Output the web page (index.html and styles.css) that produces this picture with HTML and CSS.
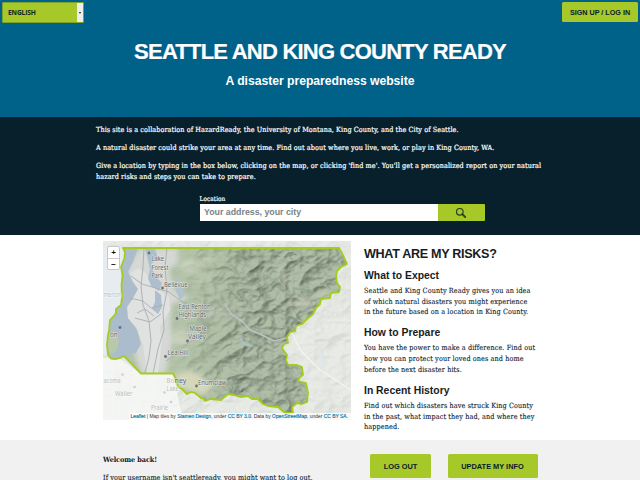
FILE: index.html
```html
<!DOCTYPE html>
<html lang="en">
<head>
<meta charset="utf-8">
<title>Seattle and King County Ready</title>
<link rel="stylesheet" href="styles.css">
</head>
<body>
<header class="banner">
  <div class="topbar">
    <div class="language"><span>ENGLISH</span><i class="arrow"></i></div>
    <a class="button login">SIGN UP / LOG IN</a>
  </div>
  <h1>SEATTLE AND KING COUNTY READY</h1>
  <p class="tagline">A disaster preparedness website</p>
</header>
<section class="intro">
  <p>This site is a collaboration of HazardReady, the University of Montana, King County, and the City of Seattle.</p>
  <p>A natural disaster could strike your area at any time. Find out about where you live, work, or play in King County, WA.</p>
  <p>Give a location by typing in the box below, clicking on the map, or clicking 'find me'. You'll get a personalized report on your natural<br>hazard risks and steps you can take to prepare.</p>
  <div class="search">
    <div class="label">Location</div>
    <div class="row">
      <div class="field">Your address, your city</div>
      <div class="go"><svg width="12" height="12" viewBox="0 0 12 12"><circle cx="4.8" cy="4.8" r="3.3" fill="none" stroke="#263f20" stroke-width="1.2"/><path d="M7.3 7.2 10.2 10" stroke="#263f20" stroke-width="1.8" stroke-linecap="round"/></svg></div>
    </div>
  </div>
</section>
<main class="content">
  <div class="map">
    <svg class="terrain" width="248" height="179" viewBox="103 241 248 179">
      <defs>
        <path id="county" d="M123 248 125 252 124.500 258 121 267 122.500 275 121.500 285 122 298 121 305 116 309 115.700 314 110 320 109 331 108 335 107 345 108 355 111 358.500 115 359 120 358 124 356 141 373.500H173L176.500 380 178 387 182 389 187 394 191 392 195 393 201 398 203 398 205 401 211 399 221 400 228 394 234 395 240 397 248 396 252 399 258 399 263 404 268 406 278 407 285 413H293L292 407 297 403 302 404 307 402 308 393 306 383 298 381 300 377 303 375 302 367 297 365 288 365 286 360 287 355 282 348 284 344 288 343 287 337 290 332 295 331 296 326 302 324 307 319 313 314 316 308 320 304 321 299 330 298 331 293 339 292 340 287 337 283 336 277 337 271 341 267 347 264 342 253 339 248Z"/>
        <clipPath id="inside"><use href="#county"/></clipPath>
        <linearGradient id="east" x1="180" x2="245" y1="310" y2="315" gradientUnits="userSpaceOnUse"><stop offset="0" stop-color="#fff" stop-opacity=".1"/><stop offset="1" stop-color="#fff"/></linearGradient>
        <mask id="fade" maskUnits="userSpaceOnUse" x="103" y="241" width="248" height="179"><rect x="103" y="241" width="248" height="179" fill="url(#east)"/></mask>
        <filter id="relief" x="0" y="0" width="100%" height="100%" color-interpolation-filters="sRGB">
          <feTurbulence type="turbulence" baseFrequency=".035 .045" numOctaves="3" seed="8"/>
          <feColorMatrix values="0 0 0 0 0  0 0 0 0 0  0 0 0 0 0  -1 0 0 0 1"/>
          <feDiffuseLighting surfaceScale="6" diffuseConstant="1" lighting-color="#c4d2bb"><feDistantLight azimuth="225" elevation="58"/></feDiffuseLighting>
        </filter>
        <filter id="soft"><feGaussianBlur stdDeviation="2.500"/></filter>
      </defs>
      <rect x="103" y="241" width="248" height="179" fill="#eef0ec"/>
      <rect x="103" y="241" width="248" height="179" filter="url(#relief)" opacity=".1"/>
      <path d="M103 248H123L121 305 109 320 107 355H103Z" fill="#e6ecf0"/>
      <path d="M103 358 120 359 141 374 173 374 183 420H103Z" fill="#f8f9f8" opacity=".8"/>
      <path d="M292 333 301 351 320 370 351 390" fill="none" stroke="#f3f4f2" stroke-width="1.300"/>
      <path d="m319 338 3 22 3 12-5-8Zm20 15 1 17 6 7-7-3Z" fill="#dfe6ec"/>
      <g clip-path="url(#inside)">
        <rect x="103" y="241" width="248" height="179" fill="#b5c5aa"/>
        <g fill="#cdd5bf" filter="url(#soft)"><ellipse cx="192" cy="266" rx="12" ry="7"/><ellipse cx="207" cy="258" rx="8" ry="4"/><ellipse cx="206" cy="280" rx="6" ry="6"/><ellipse cx="213" cy="311" rx="12" ry="6"/><ellipse cx="183" cy="338" rx="11" ry="8"/></g>
        <g mask="url(#fade)"><rect x="103" y="241" width="248" height="179" fill="#a3b39c"/><rect x="103" y="241" width="248" height="179" filter="url(#relief)" opacity=".42"/></g>
        <path d="M139 248H178V263L169 270 174 290 190 298 172 304 170 325 173 340 165 374H141L133 350 138 332 122 309 132 289 125 270Z" fill="#d5d8d4" filter="url(#soft)"/>
        <path d="M130 273 139 268 147 274 151 286 169 296 170 310 160 327 162 341 158 374H147L143 345 136 327 120 310 126 297 135 291Z" fill="#e0e1e1"/>
        <path d="M120 248H138L133 262 128 272 133 282 138 289 132 300 127 307 128 318 137 330 141 344 136 353 124 356 113 359 108 350 108 326 117 313Z" fill="#abbdcd"/>
        <path d="M107 333 114 332 119 341 117 350 112 354 107 351Z" fill="#b8c8ac"/>
        <path d="M145 248H155L158 259 151 264 155 276 162 283 159 291 151 286 148 278 150 269Z" fill="#adbfce"/><path d="M155 290 161 295 162 307 158 314 152 309 155 302Z" fill="#adbfce"/><path d="M177 276 181 282 184 296 180 300 176 291Z" fill="#b1c2cf"/>
        <path d="M175 375 190 370 204 377 213 388 204 395 187 391 177 387Z" fill="#d5d7b9" filter="url(#soft)"/>
        <g fill="none" stroke="#aaaeae" stroke-width=".9"><path d="M144 248 143 267 141 286 143 305 149 321 151 341 149 357 145 373"/><path d="M167 248 165 267 167 291 163 311 164 330 158 349 153 374"/><path d="M131 276 142 284 169 292 181 301 203 309 224 312 237 320"/><path d="M130 298 143 301 151 308 163 305M135 318 150 322 161 314M166 361 176 354 188 343 203 336 210 331M137 313 145 309 154 316"/></g>
        <path d="M225 303 231 314 242 321 250 330 262 335 274 341 287 338" stroke="#bfc3c0" stroke-width="1.500" fill="none"/><path d="m240 338 4 5 9 3-9-1Z" fill="#afc0d0" stroke="#afc0d0"/>
        <g fill="#d6d2c2" opacity=".55" filter="url(#soft)"><ellipse cx="282" cy="274" rx="3" ry="8"/><ellipse cx="304" cy="303" rx="9" ry="4"/><ellipse cx="322" cy="295" rx="7" ry="4"/></g>
      </g>
      <use href="#county" fill="none" stroke="#a4cb20" stroke-width="1.800" stroke-linejoin="round"/>
      <g fill="#6c7074"><circle cx="149" cy="253" r="1.400"/><circle cx="162.500" cy="288" r="1.400"/><circle cx="177" cy="318.500" r="1.400"/><circle cx="187.500" cy="341" r="1.400"/><circle cx="165.500" cy="356.500" r="1.400"/><circle cx="196.500" cy="386" r="1.400"/><circle cx="120" cy="327.500" r="1.400"/></g>
      <g fill="#cdd0d2"><circle cx="122.500" cy="374.500" r="1.300"/><circle cx="134.500" cy="387" r="1.300"/><circle cx="164.500" cy="392.500" r="1.300"/><circle cx="171" cy="402" r="1.300"/></g>
      <g class="place"><text x="151.500" y="261" textLength="12.500" lengthAdjust="spacingAndGlyphs">Lake</text><text x="151.500" y="269.500" textLength="17" lengthAdjust="spacingAndGlyphs">Forest</text><text x="151.500" y="278" textLength="11.500" lengthAdjust="spacingAndGlyphs">Park</text><text x="164" y="286.500" textLength="23.500" lengthAdjust="spacingAndGlyphs">Bellevue</text><text x="178.500" y="308.500" textLength="32" lengthAdjust="spacingAndGlyphs">East Renton</text><text x="178.500" y="317" textLength="27.500" lengthAdjust="spacingAndGlyphs">Highlands</text><text x="189.500" y="330.500" textLength="17" lengthAdjust="spacingAndGlyphs">Maple</text><text x="188" y="339" textLength="18" lengthAdjust="spacingAndGlyphs">Valley</text><text x="167.500" y="355" textLength="21" lengthAdjust="spacingAndGlyphs">Lea Hill</text><text x="198" y="384.500" textLength="28.500" lengthAdjust="spacingAndGlyphs">Enumclaw</text><text x="110" y="336.500" textLength="7.500" lengthAdjust="spacingAndGlyphs">on</text><text x="174.500" y="382.500" textLength="12" lengthAdjust="spacingAndGlyphs">ney</text></g>
      <g class="place pale"><text x="103.500" y="297" textLength="18" lengthAdjust="spacingAndGlyphs">merton</text><text x="103.500" y="382.500" textLength="17" lengthAdjust="spacingAndGlyphs">acoma</text><text x="115" y="395.500" textLength="17.500" lengthAdjust="spacingAndGlyphs">Waller</text><text x="166.500" y="382.500" textLength="7.500" lengthAdjust="spacingAndGlyphs">Bo</text><text x="166.500" y="391" textLength="12" lengthAdjust="spacingAndGlyphs">Lake</text><text x="151" y="410" textLength="17" lengthAdjust="spacingAndGlyphs">Prairie</text></g>
    </svg>
    <div class="zoomer"><b>+</b><b>−</b></div>
    <div class="credit"><a>Leaflet</a> | Map tiles by <a>Stamen Design</a>, under <a>CC BY 3.0</a>. Data by <a>OpenStreetMap</a>, under <a>CC BY SA</a>.</div>
  </div>
  <article class="risks">
    <h2>WHAT ARE MY RISKS?</h2>
    <h3>What to Expect</h3>
    <p>Seattle and King County Ready gives you an idea<br>of which natural disasters you might experience<br>in the future based on a location in King County.</p>
    <h3>How to Prepare</h3>
    <p>You have the power to make a difference. Find out<br>how you can protect your loved ones and home<br>before the next disaster hits.</p>
    <h3>In Recent History</h3>
    <p>Find out which disasters have struck King County<br>in the past, what impact they had, and where they<br>happened.</p>
  </article>
</main>
<footer class="account">
  <div class="welcome"><strong>Welcome back!</strong><p>If your username isn't seattleready, you might want to log out.</p></div>
  <a class="button out">LOG OUT</a>
  <a class="button update">UPDATE MY INFO</a>
</footer>
</body>
</html>
```
FILE: styles.css
```css
* { box-sizing: border-box; }
html, body { margin: 0; height: 480px; overflow: hidden; }
body { background: #fff; color: #08202c; font-family: "Roboto Slab", "DejaVu Serif Condensed", "DejaVu Serif", serif; font-stretch: condensed; }
h1, h2, h3, p { margin: 0; }
.banner { height: 117px; background: #006189; color: #fff; text-align: center; font-family: "Liberation Sans", sans-serif; font-weight: bold; }
.topbar { display: flex; justify-content: space-between; padding: 2px 2px 0; height: 37px; }
.language { width: 82px; height: 21px; border: 1px solid #7da32b; border-radius: 1px; background: #a6c828; color: #10291f; display: flex; justify-content: space-between; align-items: center; padding-left: 5px; font: bold 6.7px "Open Sans", sans-serif; letter-spacing: -.15px; }
.arrow { width: 6px; height: 19px; background: #eee; display: grid; place-items: center; }
.arrow::after { content: ""; border: 1.5px solid transparent; border-top: 2px solid #111; border-bottom: 0; }
.button { display: grid; place-items: center; background: #a6c828; color: #08202c; border-radius: 1.5px; font: bold 7.2px "Liberation Sans", sans-serif; white-space: nowrap; }
.login { width: 76px; height: 20px; }
h1 { font-size: 22px; line-height: 30px; letter-spacing: -.78px; -webkit-text-stroke: .2px #fff; white-space: nowrap; }
.tagline { font-size: 12.2px; line-height: 16px; margin-top: 6px; letter-spacing: -.03px; }
.intro { height: 118px; padding: 8px 96px 0; background: #08202c; color: #fff; font-size: 7.2px; line-height: 10.7px; letter-spacing: .08px; -webkit-text-stroke: .2px #fff; white-space: nowrap; }
.intro p { margin-bottom: 7.4px; }
.search { width: 285.5px; margin: 12.6px 0 0 103.5px; }
.label { font-size: 6.4px; line-height: 9px; }
.row { display: flex; height: 17px; -webkit-text-stroke: 0; }
.field { width: 238px; background: #fff; color: #778487; padding-left: 4.5px; font: bold 8.8px/17px "Liberation Sans", sans-serif; letter-spacing: 0; }
.go { flex: 1; background: #a6c828; display: grid; place-items: center; border-radius: 0 1px 1px 0; }
.content { height: 205px; display: flex; padding: 6px 0 0 103px; gap: 13px; }
.map { position: relative; width: 248px; height: 180px; overflow: hidden; }
.terrain { display: block; }
.place { font: 7.6px "Noto Sans", sans-serif; fill: #5f6367; stroke: #edf0e9cc; stroke-width: 1.2px; paint-order: stroke; }
.pale { fill: #b9bdc0; stroke: #f7f8f7; }
.zoomer { position: absolute; left: 4px; top: 5px; width: 13px; height: 24px; border: 1px solid #c5c9c8; border-radius: 2px; background: #fff; display: grid; grid-template-rows: 1fr 1fr; text-align: center; font: bold 8px/11px "Liberation Sans", sans-serif; color: #111; }
.zoomer b + b { border-top: 1px solid #ccc; }
.credit { position: absolute; right: 0; bottom: 0; padding: 0 3px 0 2px; background: #ffffffb5; color: #333; font: 4.95px/8px "Liberation Sans", sans-serif; white-space: nowrap; }
.credit a { color: #0078a8; -webkit-text-stroke: .15px #0078a8; }
.risks { font-size: 7.2px; line-height: 10.7px; letter-spacing: .11px; white-space: nowrap; }
.risks p, .welcome p { -webkit-text-stroke: .1px #08202c; }
.risks h2, .risks h3 { color: #181c1d; font-family: "Liberation Sans", sans-serif; }
.risks h2 { font-size: 12.6px; line-height: 16px; margin-top: 5px; letter-spacing: -.32px; }
.risks h3 { font-size: 10.4px; line-height: 13px; margin-top: 7px; margin-bottom: 4px; letter-spacing: 0; }
.risks p + h3 { margin-top: 8.3px; }
.account { height: 40px; background: #f1f1f1; padding-left: 103px; display: flex; align-items: flex-start; }
.welcome { width: 267px; padding-top: 15px; font-size: 7.2px; line-height: 10.7px; letter-spacing: .08px; white-space: nowrap; }
.welcome strong { letter-spacing: -.05px; }
.welcome p { margin-top: 7px; }
.account .button { height: 24px; margin-top: 14px; font-size: 7.4px; }
.out { width: 61px; }
.update { width: 90px; margin-left: 16.5px; }
```
